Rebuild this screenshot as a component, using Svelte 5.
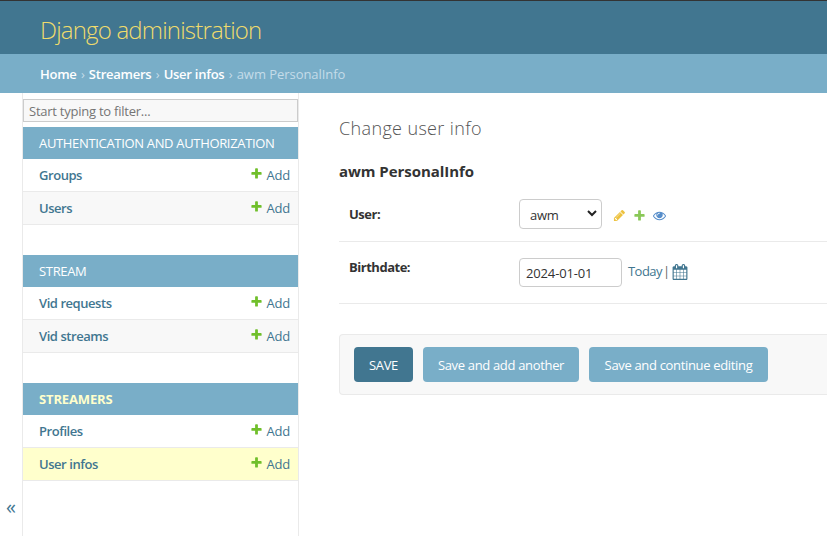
<script>
  const plus = 'M1600 796v192q0 40-28 68t-68 28h-416v416q0 40-28 68t-68 28h-192q-40 0-68-28t-28-68v-416h-416q-40 0-68-28t-28-68v-192q0-40 28-68t68-28h416v-416q0-40 28-68t68-28h192q40 0 68 28t28 68v416h416q40 0 68 28t28 68z';
  const pencil = 'M491 1536l91-91-235-235-91 91v107h128v128h107zm523-928q0-22-22-22-10 0-17 7l-542 542q-7 7-7 17 0 22 22 22 10 0 17-7l542-542q7-7 7-17zm-54-192l416 416-832 832h-416v-416zm683 96q0 53-37 90l-166 166-416-416 166-165q36-38 90-38 53 0 91 38l235 234q37 39 37 91z';
  const eye = 'M1664 960q-152-236-381-353 61 104 61 225 0 185-131.5 316.5t-316.5 131.5-316.5-131.5-131.5-316.5q0-121 61-225-229 117-381 353 133 205 333.5 326.5t434.5 121.5 434.5-121.5 333.5-326.5zm-720-384q0-20-14-34t-34-14q-125 0-214.5 89.5t-89.5 214.5q0 20 14 34t34 14 34-14 14-34q0-86 61-147t147-61q20 0 34-14t14-34zm848 384q0 34-20 69-140 230-376.5 368.5t-499.5 138.5-499.5-139-376.5-368q-20-35-20-69t20-69q140-229 376.5-368t499.5-139 499.5 139 376.5 368q20 35 20 69z';
  const calendar = 'M192 1664h288v-288h-288v288zm352 0h320v-288h-320v288zm-352-352h288v-320h-288v320zm352 0h320v-320h-320v320zm-352-384h288v-288h-288v288zm736 736h320v-288h-320v288zm-384-736h320v-288h-320v288zm768 736h288v-288h-288v288zm-384-352h320v-320h-320v320zm-352-864v-288q0-13-9.5-22.5t-22.5-9.5h-64q-13 0-22.5 9.5t-9.5 22.5v288q0 13 9.5 22.5t22.5 9.5h64q13 0 22.5-9.5t9.5-22.5zm736 864h288v-320h-288v320zm-384-384h320v-288h-320v288zm384 0h288v-288h-288v288zm32-480v-288q0-13-9.5-22.5t-22.5-9.5h-64q-13 0-22.5 9.5t-9.5 22.5v288q0 13 9.5 22.5t22.5 9.5h64q13 0 22.5-9.5t9.5-22.5zm384-64v1280q0 52-38 90t-90 38h-1408q-52 0-90-38t-38-90v-1280q0-52 38-90t90-38h128v-96q0-66 47-113t113-47h64q66 0 113 47t47 113v96h384v-96q0-66 47-113t113-47h64q66 0 113 47t47 113v96h128q52 0 90 38t38 90z';

  const apps = [
    { name: 'Authentication and Authorization', models: ['Groups', 'Users'] },
    { name: 'Stream', models: ['Vid requests', 'Vid streams'] },
    { name: 'Streamers', current: true, models: ['Profiles', 'User infos'] }
  ];
  const currentModel = 'User infos';
  let birthdate = $state('2024-01-01');
</script>

{#snippet icon(path, size, color)}
  <svg width={size} height={size} viewBox="0 0 1792 1792"><path fill={color} d={path} /></svg>
{/snippet}

<div class="page">
  <header><h1>Django administration</h1></header>
  <nav class="crumbs">
    <b>Home</b><i>›</i><b>Streamers</b><i>›</i><b>User infos</b><i>›</i><span>awm PersonalInfo</span>
  </nav>
  <div class="body">
    <div class="toggle">«</div>
    <aside>
      <input class="filter" placeholder="Start typing to filter..." />
      {#each apps as app}
        <section>
          <h2 class:current={app.current}>{app.name}</h2>
          {#each app.models as model}
            <div class="model" class:selected={model === currentModel}>
              <span class="label">{model}</span>
              <span class="add">{@render icon(plus, 13, '#70bf2b')}<span>Add</span></span>
            </div>
          {/each}
        </section>
      {/each}
    </aside>
    <main>
      <h3>Change user info</h3>
      <h4>awm PersonalInfo</h4>
      <div class="row user">
        <span class="field">User:</span>
        <div class="select">
          <span>awm</span>
          <svg width="10" height="7" viewBox="0 0 10 7"><path d="M1 1l4 4 4-4" fill="none" stroke="#222" stroke-width="2" /></svg>
        </div>
        <div class="related">
          {@render icon(pencil, 13, '#edc23f')}
          {@render icon(plus, 13, '#8ac858')}
          {@render icon(eye, 13, '#568dca')}
        </div>
      </div>
      <div class="row birth">
        <span class="field">Birthdate:</span>
        <input class="date" bind:value={birthdate} />
        <div class="shortcuts"><span>Today</span><em>|</em>{@render icon(calendar, 16, '#417690')}</div>
      </div>
      <div class="submit">
        <button class="save">SAVE</button>
        <button class="another">Save and add another</button>
        <button class="continue">Save and continue editing</button>
      </div>
    </main>
  </div>
</div>

<style>
  :global(body) { background: #fff; overflow: hidden; }
  .page {
    height: 536px; display: flex; flex-direction: column; overflow: hidden;
    font: 13px/18px "Open Sans", "Noto Sans", sans-serif; color: #333;
    letter-spacing: -0.35px; white-space: nowrap;
  }
  * { box-sizing: border-box; }
  svg { display: block; flex: none; }
  h1, h2, h3, h4 { margin: 0; }
  header { height: 54px; flex: none; background: #417690; border-top: 1px solid #333; padding: 0 40px; display: flex; align-items: center; }
  h1 { font-size: 24px; line-height: 32px; font-weight: 300; color: #f0dc6c; letter-spacing: -0.8px; padding-top: 4px; }
  .crumbs { height: 39px; flex: none; background: #79aec8; padding: 0 40px; display: flex; align-items: center; font-size: 13px; color: #c4dce8; letter-spacing: -0.05px; }
  .crumbs b { color: #fff; font-weight: 600; letter-spacing: -0.25px; }
  .crumbs i { font-style: normal; padding: 0 4px 0 4.4px; }
  .body { flex: 1; display: flex; min-height: 0; }
  .toggle { width: 22px; color: #417690; font-size: 20px; line-height: 20px; padding: 404px 0 0 6px; letter-spacing: 0; flex: none; }
  aside { width: 277px; flex: none; border: solid #eaeaea; border-width: 0 1px; padding-top: 6px; }
  .filter { display: block; width: 275px; height: 23px; border: 1px solid #ccc; background: #f8f8f8; padding: 0 5px; font: inherit; letter-spacing: -0.24px; outline: 0; border-radius: 0; }
  .filter::placeholder { color: #757575; opacity: 1; }
  section { margin: 5px 0 30px; }
  section + section { margin-top: 0; }
  h2 { height: 32px; background: #79aec8; color: #fff; font-size: 13px; line-height: 32px; font-weight: 400; text-transform: uppercase; padding-left: 16px; letter-spacing: -0.33px; }
  h2.current { color: #ffffcc; font-weight: 700; letter-spacing: -0.15px; }
  .model { height: 33px; border-bottom: 1px solid #eaeaea; padding: 0 8px 0 16px; display: flex; align-items: center; justify-content: space-between; color: #417690; }
  .model:nth-child(odd) { background: #f8f8f8; }
  .model.selected { background: #ffffcc; }
  .label { font-weight: 600; letter-spacing: -0.45px; }
  .add { display: flex; align-items: center; gap: 3px; letter-spacing: -0.2px; }
  .add svg { position: relative; top: -2px; }
  main { flex: 1; min-width: 0; padding: 23px 0 0 40px; }
  h3 { font-size: 18px; line-height: 24px; font-weight: 300; color: #555; letter-spacing: 0.36px; }
  h4 { font-size: 15px; line-height: 20px; font-weight: 700; margin-top: 21px; letter-spacing: -0.05px; }
  .row { display: flex; align-items: flex-start; border-bottom: 1px solid #eaeaea; padding-left: 10px; }
  .user { height: 61px; padding-top: 18px; }
  .birth { height: 62px; padding-top: 16px; }
  .field { width: 170px; font-weight: 700; flex: none; letter-spacing: -0.48px; }
  .user .field { padding-top: 6px; }
  .select { width: 83px; height: 30px; border: 1px solid #ccc; border-radius: 4px; display: flex; justify-content: space-between; align-items: center; padding: 2px 4px 0 10px; letter-spacing: -0.3px; }
  .select svg { margin-top: -3px; }
  .related { display: flex; gap: 7px; padding: 10px 0 0 11px; }
  .date { width: 103px; height: 29px; border: 1px solid #ccc; border-radius: 4px; padding: 1px 6px 0; font: inherit; color: #333; outline: 0; letter-spacing: -0.15px; }
  .shortcuts { display: flex; align-items: center; padding: 4px 0 0 6px; color: #417690; }
  .shortcuts span { letter-spacing: -0.55px; }
  .shortcuts em { font-style: normal; color: #666; width: 10px; padding-left: 1px; }
  .shortcuts svg { margin-top: 1px; }
  .submit { height: 61px; margin-top: 30px; border: 1px solid #eaeaea; border-right: 0; border-radius: 4px 0 0 4px; background: #f8f8f8; padding: 12px 14px; display: flex; gap: 10px; }
  button { height: 35px; border: 0; border-radius: 4px; background: #79aec8; color: #fff; font: inherit; letter-spacing: -0.33px; padding: 0; }
  .save { width: 59px; background: #417690; }
  .another { width: 156px; }
  .continue { width: 179px; }
</style>
